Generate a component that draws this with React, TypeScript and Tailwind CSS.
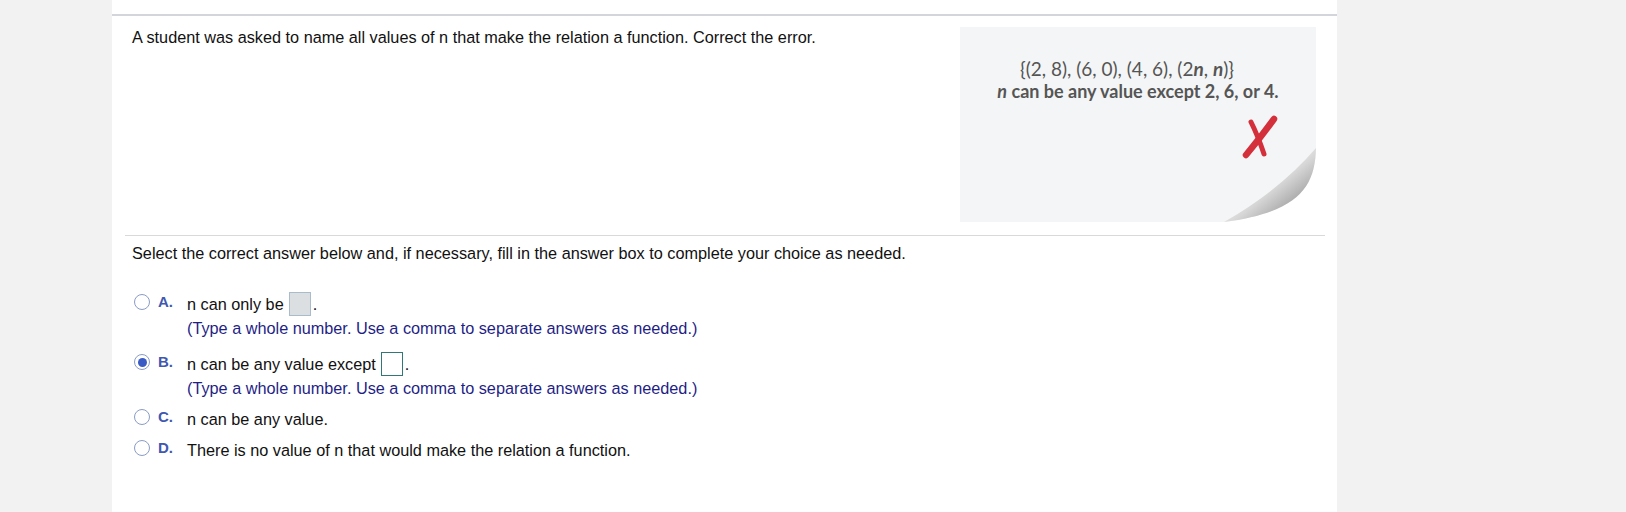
import React from 'react';

function Radio({ checked }: { checked?: boolean }) {
  return (
    <span className="flex h-[16px] w-[16px] shrink-0 items-center justify-center rounded-full border-[1.5px] border-[#8a9cc6] bg-white">
      {checked && <span className="h-[9px] w-[9px] rounded-full bg-[#3b5bc4]" />}
    </span>
  );
}

function Option({ letter, checked, children, hint, className }: { letter: string; checked?: boolean; children: React.ReactNode; hint?: boolean; className?: string }) {
  return (
    <div className={`flex items-start ${className ?? ''}`}>
      <div className="flex h-[20px] items-center">
        <Radio checked={checked} />
        <span className="ml-[8px] w-[29px] shrink-0 text-[15px] font-bold text-[#4058b0]">{letter}.</span>
      </div>
      <div>
        <div className="flex h-[24px] items-center text-[16.25px] text-[#111]">{children}</div>
        {hint && (
          <div className="mt-[2px] text-[16.25px] leading-[20px] text-[#1f1f86]">(Type a whole number. Use a comma to separate answers as needed.)</div>
        )}
      </div>
    </div>
  );
}

function NoteCard() {
  return (
    <div className="relative h-[195px] w-[356px] bg-[#f4f5f6] font-['Lato',sans-serif] text-[#555]">
      <div className="pt-[30px] text-center text-[19px] leading-[23px]">
        <div className="pr-[22px]">{'{(2, 8), (6, 0), (4, 6), (2'}<b><i>n</i></b>{', '}<b><i>n</i></b>{')}'}</div>
        <div className="font-bold text-[18px]"><i>n</i> can be any value except 2, 6, or 4.</div>
      </div>
      <svg className="absolute left-[280px] top-[88px]" width="40" height="44" viewBox="0 0 40 44">
        <path d="M34 4 C26 15 16 28 6 40" stroke="#d3303c" strokeWidth="6.5" strokeLinecap="round" fill="none" />
        <path d="M11 7 C16 17 20 27 24 39" stroke="#d3303c" strokeWidth="5" strokeLinecap="round" fill="none" />
      </svg>
      <svg className="absolute bottom-0 right-0" width="100" height="80" viewBox="0 0 100 80">
        <defs>
          <linearGradient id="curl" x1="0.35" y1="0.35" x2="0.85" y2="0.85">
            <stop offset="0" stopColor="#f4f4f4" />
            <stop offset="0.4" stopColor="#d6d6d6" />
            <stop offset="1" stopColor="#939393" />
          </linearGradient>
        </defs>
        <path d="M100 6 C99 46 82 70 8 80 L100 80 Z" fill="#ffffff" />
        <path d="M100 6 Q64 48 8 80 C82 70 99 46 100 6 Z" fill="url(#curl)" />
      </svg>
    </div>
  );
}

export default function App() {
  return (
    <div className="min-h-[512px] bg-[#f2f2f2] font-['Liberation_Sans',Arial,sans-serif]">
      <div className="ml-[112px] h-[512px] w-[1225px] bg-white">
        <div className="h-[14px]" />
        <div className="border-t-2 border-[#d4d4dc]">
          <div className="flex justify-between pl-[20px] pr-[21px] pt-[11px]">
            <p className="-mt-[1px] text-[16.25px] leading-[22px] text-[#111]">A student was asked to name all values of n that make the relation a function. Correct the error.</p>
            <NoteCard />
          </div>
          <div className="ml-[13px] mr-[12px] mt-[13px] border-t border-[#d9d9d9]" />
          <p className="ml-[20px] mt-[6px] text-[16.25px] leading-[22px] text-[#111]">Select the correct answer below and, if necessary, fill in the answer box to complete your choice as needed.</p>
          <div className="ml-[22px] mt-[28px] flex flex-col">
            <Option letter="A" hint>
              n can only be
              <span className="ml-[5px] mr-[2px] inline-block h-[24px] w-[22px] border border-[#a9bccb] bg-[#dcdfe2]" />.
            </Option>
            <Option letter="B" checked hint className="mt-[14px]">
              n can be any value except
              <span className="ml-[5px] mr-[2px] inline-block h-[24px] w-[22px] border border-[#2f7877] bg-white" />.
            </Option>
            <Option letter="C" className="mt-[9px]">n can be any value.</Option>
            <Option letter="D" className="mt-[7px]">There is no value of n that would make the relation a function.</Option>
          </div>
        </div>
      </div>
    </div>
  );
}
